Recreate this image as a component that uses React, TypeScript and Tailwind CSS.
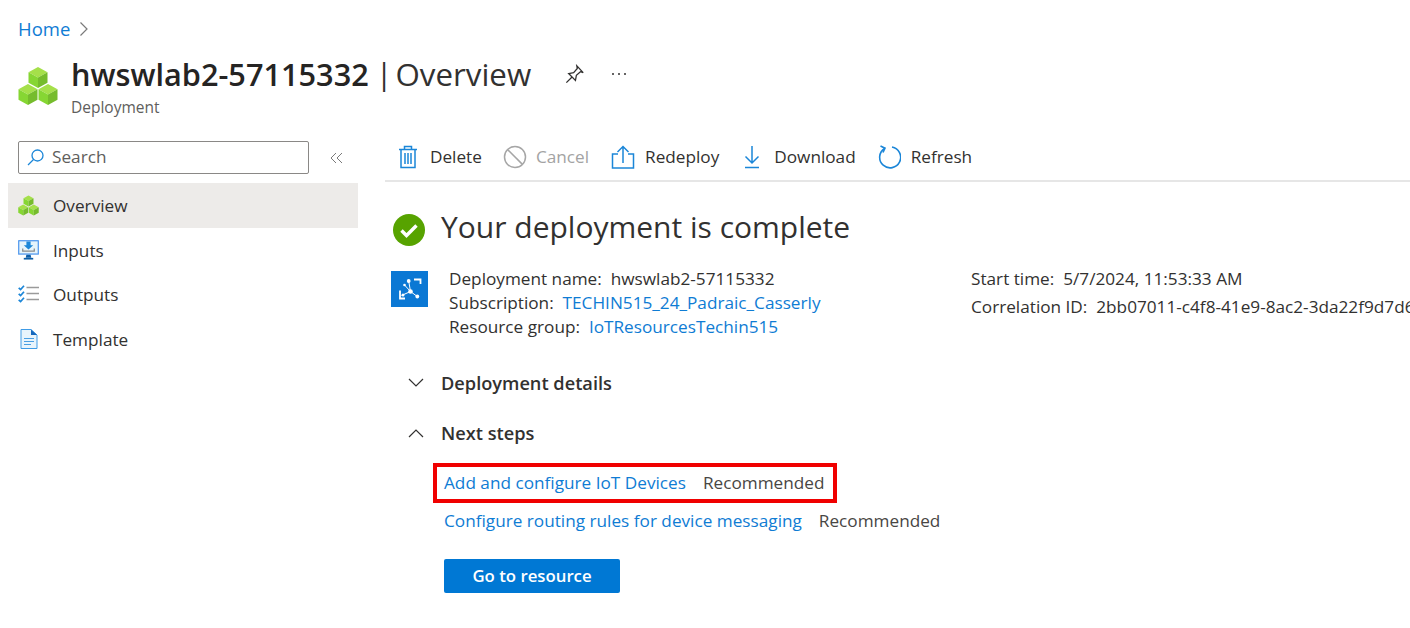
import React from "react";

const Cubes = ({ s = 40 }: { s?: number }) => (
  <svg width={s} height={s} viewBox="0 0 40 40">
    {[[20, 1], [10, 18], [30, 18]].map(([x, y], i) => (
      <g key={i} transform={`translate(${x} ${y})`}>
        <path d="M0 0L9.5 5.3L0 10.6L-9.5 5.3Z" fill="#a5e04a" />
        <path d="M-9.5 5.3L0 10.6V21L-9.5 15.7Z" fill="#86d633" />
        <path d="M9.5 5.3L0 10.6V21L9.5 15.7Z" fill="#76bc2d" />
      </g>
    ))}
  </svg>
);

const B = "#1b86d8";

const TrashIcon = () => (
  <svg width="20" height="24" viewBox="0 0 20 24" fill="none" stroke={B} strokeWidth="1.5">
    <path d="M1 4.5H19M3 4.5V22.5H17V4.5M6.5 4.5V1.5H13.5V4.5M7 8V19M10 8V19M13 8V19" />
  </svg>
);
const CancelIcon = () => (
  <svg width="24" height="24" viewBox="0 0 24 24" fill="none" stroke="#a6a6a6" strokeWidth="1.5">
    <circle cx="12" cy="12" r="10.5" />
    <path d="M4.6 4.6L19.4 19.4" />
  </svg>
);
const RedeployIcon = () => (
  <svg width="24" height="24" viewBox="0 0 24 24" fill="none" stroke={B} strokeWidth="1.5">
    <path d="M7 9H1.5V23H22.5V9H17M12 18V2M6.5 7L12 1.5L17.5 7" />
  </svg>
);
const DownloadIcon = () => (
  <svg width="16" height="24" viewBox="0 0 16 24" fill="none" stroke={B} strokeWidth="1.5">
    <path d="M8 1V18M1.5 11.5L8 18L14.5 11.5M1 22.5H15" />
  </svg>
);
const RefreshIcon = () => (
  <svg width="24" height="24" viewBox="0 0 24 24" fill="none" stroke={B} strokeWidth="1.6">
    <path d="M7.5 3.5A10.5 10.5 0 1 0 15 2" />
    <path d="M3.5 1L8 3.2L6 7.5" />
  </svg>
);

const InputsIcon = () => (
  <svg width="21" height="20" viewBox="0 0 20 19">
    <rect x="0" y="0" width="20" height="14" rx="0.8" fill="#5ea0ef" />
    <rect x="1.3" y="1.3" width="17.4" height="11.4" fill="#e6f4fb" />
    <path d="M8 1.3H12V5H14.5L10 9L5.5 5H8Z" fill="#1b86d8" />
    <path d="M4.5 8V10.5H15.5V8" fill="none" stroke="#8a8a8a" strokeWidth="1.2" />
    <path d="M8 14H12L12.7 17H7.3Z" fill="#0f5fa8" />
    <rect x="5.5" y="17" width="9" height="1.6" fill="#0f5fa8" />
  </svg>
);
const OutputsIcon = () => (
  <svg width="21" height="18" viewBox="0 0 21 18" fill="none">
    <path d="M0.7 2.8L2.6 4.6L6 0.8M0.7 8.8L2.6 10.6L6 6.8M0.7 14.8L2.6 16.6L6 12.8" stroke="#1b86d8" strokeWidth="1.7" />
    <path d="M8.5 2.5H21M8.5 8.5H21M8.5 14.5H21" stroke="#9a9a9a" strokeWidth="1.7" />
  </svg>
);
const TemplateIcon = () => (
  <svg width="18" height="20" viewBox="0 0 18 20">
    <path d="M1 0.5H11L17 6V19.5H1Z" fill="#e8f4fc" stroke="#3f9be6" strokeWidth="1" />
    <path d="M11 0.5L17 6H11Z" fill="#1668bd" />
    <path d="M4 9.5H14M4 12.5H14M4 15.5H11" stroke="#4a9fe3" strokeWidth="1.2" />
  </svg>
);

const IotIcon = () => (
  <svg width="37" height="36" viewBox="0 0 37 36">
    <rect width="37" height="36" fill="#0b78d4" />
    <g fill="none" stroke="#fff">
      <path d="M17.7 10L19.5 20.5L26.3 25.5M19.5 20.5L10.5 24.5M19.5 20.5L13.5 14" strokeWidth="1" />
      <path d="M23 8.5H29.5V13M9 19.5V27.5H14" strokeWidth="1.8" />
    </g>
    <g fill="#fff">
      <circle cx="19.5" cy="20.5" r="2.3" />
      <circle cx="17.7" cy="10" r="1.9" />
      <circle cx="26.3" cy="25.5" r="1.9" />
      <circle cx="13.5" cy="14" r="1.3" />
      <circle cx="12" cy="24" r="1.5" />
    </g>
  </svg>
);

const Tool = ({ icon, label, gray, className }: { icon: React.ReactNode; label: string; gray?: boolean; className?: string }) => (
  <div className={`flex items-center ${className ?? ""}`}>
    {icon}
    <span className={gray ? "text-[#a3a3a3]" : "text-[#323130]"}>{label}</span>
  </div>
);

const NavItem = ({ icon, label, active }: { icon: React.ReactNode; label: string; active?: boolean }) => (
  <div className={`flex items-center h-[44.5px] ${active ? "bg-[#edebe9]" : ""}`}>
    <div className="w-[41px] mr-[4px] flex justify-center shrink-0">{icon}</div>
    <span className="text-[#323130] mt-[2px]">{label}</span>
  </div>
);

const Link = ({ children }: { children: React.ReactNode }) => <span className="text-[#0f7cd4]">{children}</span>;

export default function App() {
  return (
    <div className="w-[1410px] h-[628px] overflow-hidden bg-white font-['Open_Sans',sans-serif] text-[17.2px] leading-[24px] text-[#323130]">
      <div className="flex items-center pl-[18px] pt-[17px] h-[41px]">
        <span className="text-[#0f7cd4] text-[18.5px]">Home</span>
        <svg width="12" height="16" viewBox="0 0 12 16" fill="none" stroke="#7a7a7a" strokeWidth="1.2" className="ml-[8px]">
          <path d="M2.5 1.5L9 8L2.5 14.5" />
        </svg>
      </div>

      <div className="flex items-start pl-[18px] h-[83px] pt-[15px]">
        <div className="mt-[10px] mr-[13px]">
          <Cubes s={40} />
        </div>
        <div>
          <div className="flex items-center h-[36px]">
            <span className="text-[30.7px] leading-[36px] font-semibold text-[#252423]">hwswlab2-57115332</span>
            <span className="text-[30.4px] leading-[36px] text-[#323130] ml-[7px]">|</span>
            <span className="text-[31.3px] leading-[36px] text-[#323130] ml-[3px]">Overview</span>
            <svg width="20" height="20" viewBox="0 0 22 22" fill="none" stroke="#323130" strokeWidth="1.4" className="ml-[34px]">
              <path d="M1.5 20.5L7.5 14.5M4 10.5L11.5 18L12.5 12.5L17 8.5L20 9.5L13 2L13.5 5L9.5 9.5Z" />
            </svg>
            <span className="ml-[27px] flex gap-[4px]">
              <i className="block w-[2px] h-[2px] rounded-full bg-[#323130]" />
              <i className="block w-[2px] h-[2px] rounded-full bg-[#323130]" />
              <i className="block w-[2px] h-[2px] rounded-full bg-[#323130]" />
            </span>
          </div>
          <div className="text-[15.5px] leading-[20px] text-[#605e5c] mt-[5px]">Deployment</div>
        </div>
      </div>

      <div className="flex">
        <aside className="w-[358px] shrink-0 pl-[8px]">
          <div className="flex items-center h-[59px] pl-[10px] pt-[8px]">
            <div className="w-[291px] h-[33px] border border-[#8a8886] rounded-[2px] flex items-center pl-[8px]">
              <svg width="17" height="17" viewBox="0 0 17 17" fill="none" stroke={B} strokeWidth="1.3">
                <circle cx="10.5" cy="6.5" r="5.5" />
                <path d="M6.5 10.5L1 16" />
              </svg>
              <span className="text-[#605e5c] ml-[8px] mb-[2px]">Search</span>
            </div>
            <svg width="13" height="12" viewBox="0 0 13 12" fill="none" stroke="#7a7a7a" strokeWidth="1" className="ml-[21px]">
              <path d="M6 1L1 6L6 11M12 1L7 6L12 11" />
            </svg>
          </div>
          <NavItem icon={<Cubes s={21} />} label="Overview" active />
          <NavItem icon={<InputsIcon />} label="Inputs" />
          <NavItem icon={<OutputsIcon />} label="Outputs" />
          <NavItem icon={<TemplateIcon />} label="Template" />
        </aside>

        <main className="flex-1 ml-[27px] min-w-0 overflow-hidden">
          <div className="h-[58px] border-b-2 border-[#e6e6e6] flex items-center pl-[13px] pt-[9px]">
            <Tool icon={<TrashIcon />} label="Delete" className="gap-[12px]" />
            <Tool icon={<CancelIcon />} label="Cancel" gray className="gap-[9px] ml-[21px]" />
            <Tool icon={<RedeployIcon />} label="Redeploy" className="gap-[10px] ml-[22px]" />
            <Tool icon={<DownloadIcon />} label="Download" className="gap-[14px] ml-[25px]" />
            <Tool icon={<RefreshIcon />} label="Refresh" className="gap-[10px] ml-[21px]" />
          </div>

          <div className="flex items-center pl-[8px] pt-[20px] h-[76px]">
            <svg width="32" height="32" viewBox="0 0 32 32" className="shrink-0">
              <circle cx="16" cy="16" r="16" fill="#57a300" />
              <path d="M8.5 16.5L13.5 21.5L23.5 11.5" fill="none" stroke="#fff" strokeWidth="3.4" />
            </svg>
            <span className="ml-[16px] mb-[6px] text-[30px] leading-[40px] text-[#323130]">Your deployment is complete</span>
          </div>

          <div className="flex pl-[6px] pt-[9px]">
            <div className="pt-[4px] shrink-0"><IotIcon /></div>
            <div className="ml-[21px] w-[522px] shrink-0 leading-[24px]">
              <div>Deployment name:&nbsp; hwswlab2-57115332</div>
              <div>Subscription:&nbsp; <Link>TECHIN515_24_Padraic_Casserly</Link></div>
              <div>Resource group:&nbsp; <Link>IoTResourcesTechin515</Link></div>
            </div>
            <div className="leading-[28px] whitespace-nowrap -mt-[2px] shrink-0">
              <div>Start time:&nbsp; 5/7/2024, 11:53:33 AM</div>
              <div>Correlation ID:&nbsp; 2bb07011-c4f8-41e9-8ac2-3da22f9d7d6b</div>
            </div>
          </div>

          <div className="flex items-center pl-[23px] mt-[29px] h-[30px]">
            <svg width="16" height="10" viewBox="0 0 16 10" fill="none" stroke="#323130" strokeWidth="1.2"><path d="M1 1L8 8L15 1" /></svg>
            <span className="ml-[17px] font-semibold text-[18.2px]">Deployment details</span>
          </div>
          <div className="flex items-center pl-[23px] mt-[20px] h-[30px]">
            <svg width="16" height="10" viewBox="0 0 16 10" fill="none" stroke="#323130" strokeWidth="1.2"><path d="M1 9L8 2L15 9" /></svg>
            <span className="ml-[17px] font-semibold text-[18.2px]">Next steps</span>
          </div>

          <div className="mt-[15px] ml-[48px] w-[404px] h-[40px] border-[4px] border-[#f00000] flex items-center pl-[7px] whitespace-nowrap">
            <Link>Add and configure IoT Devices</Link>
            <span className="ml-[17px] text-[#484644]">Recommended</span>
          </div>
          <div className="ml-[59px] mt-[3px] h-[30px] flex items-center whitespace-nowrap">
            <Link>Configure routing rules for device messaging</Link>
            <span className="ml-[17px] text-[#484644]">Recommended</span>
          </div>
          <div className="ml-[59px] mt-[23px] w-[176px] h-[34px] rounded-[2px] bg-[#0078d4] text-white text-[16.8px] font-semibold flex items-center justify-center">
            Go to resource
          </div>
        </main>
      </div>
    </div>
  );
}
